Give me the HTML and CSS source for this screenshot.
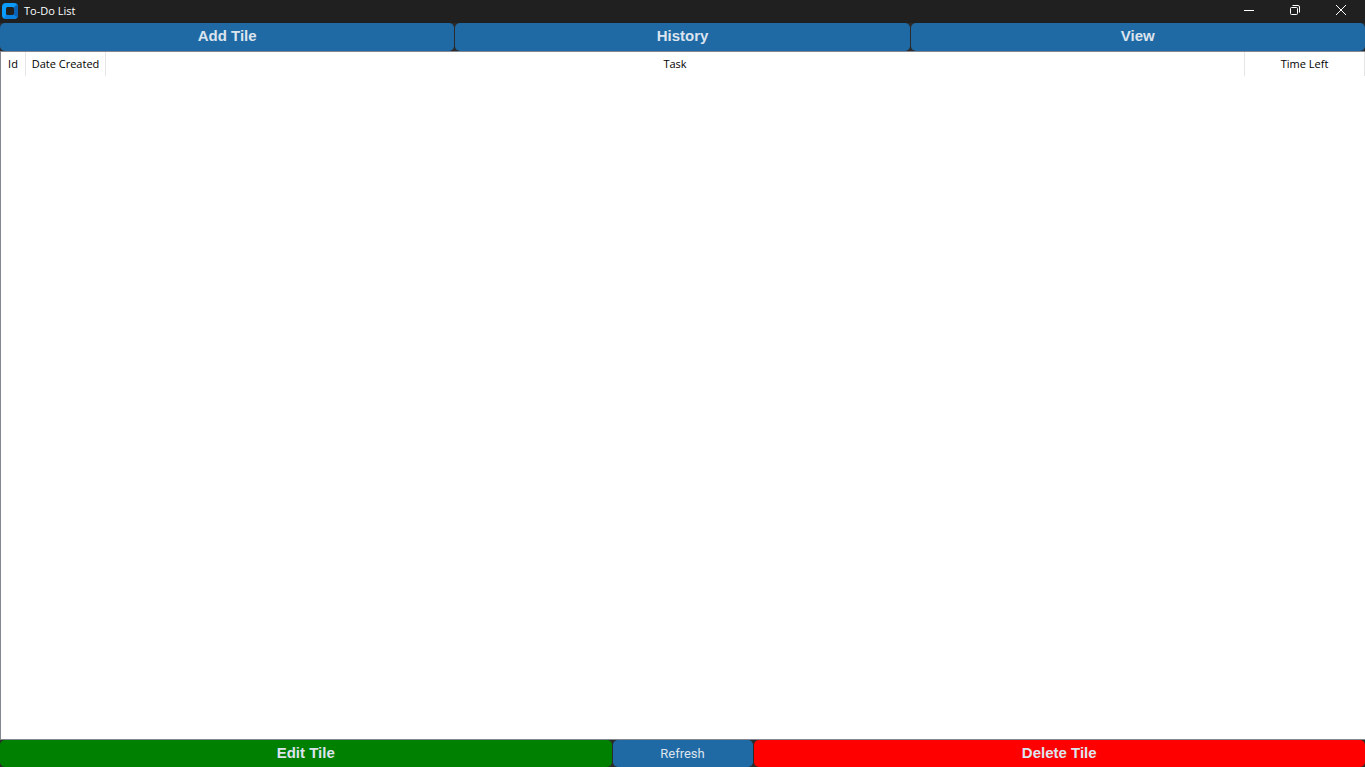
FILE: index.html
```html
<!DOCTYPE html>
<html lang="en">
<head>
<meta charset="utf-8">
<title>To-Do List</title>
<link rel="stylesheet" href="styles.css">
</head>
<body>
<div class="window">
  <header class="titlebar">
    <svg class="app-icon" viewBox="0 0 16 16" aria-hidden="true">
      <rect width="16" height="16" rx="4" fill="#0a9cff"/>
      <path d="M12 4l3-2.500A4 4 0 0 1 16 4v8a4 4 0 0 1-1 2.500L12 12z" fill="#0b62b5"/>
      <path d="M4 12h8l3 2.500A4 4 0 0 1 12 16H4a4 4 0 0 1-2-.5z" fill="#0a80e0"/>
      <rect x="4" y="4" width="8" height="8" rx="1.500" fill="#202020"/>
    </svg>
    <h1 class="title">To-Do List</h1>
    <div class="controls">
      <button class="control" type="button" aria-label="Minimize">
        <svg class="glyph" viewBox="0 0 10 10"><path d="M0 5.500h10"/></svg>
      </button>
      <button class="control" type="button" aria-label="Restore">
        <svg class="glyph" viewBox="0 0 10 10"><rect x=".5" y="2.500" width="7" height="7" rx="1"/><path d="M2.500.5H8A1.500 1.500 0 0 1 9.500 2v5.500"/></svg>
      </button>
      <button class="control" type="button" aria-label="Close">
        <svg class="glyph" viewBox="0 0 10 10"><path d="M0 0l10 10M10 0L0 10"/></svg>
      </button>
    </div>
  </header>
  <nav class="toolbar">
    <button class="button" type="button">Add Tile</button>
    <button class="button" type="button">History</button>
    <button class="button" type="button">View</button>
  </nav>
  <main class="list">
    <table class="tasks">
      <colgroup><col class="col-id"><col class="col-date"><col><col class="col-time"></colgroup>
      <thead>
        <tr><th scope="col">Id</th><th scope="col">Date Created</th><th scope="col">Task</th><th scope="col">Time Left</th></tr>
      </thead>
      <tbody></tbody>
    </table>
  </main>
  <footer class="actions">
    <button class="button edit" type="button">Edit Tile</button>
    <button class="button refresh" type="button">Refresh</button>
    <button class="button delete" type="button">Delete Tile</button>
  </footer>
</div>
</body>
</html>
```
FILE: styles.css
```css
* {
  box-sizing: border-box;
}

body {
  margin: 0;
  background: #2b2b2b;
  font-family: "Open Sans", "Noto Sans", sans-serif;
}

.window {
  display: flex;
  flex-direction: column;
  height: 100vh;
}

.titlebar {
  display: flex;
  align-items: center;
  height: 23px;
  padding: 0 1px 1px 2px;
  background: #202020;
  color: #fff;
}

.app-icon {
  width: 16px;
  height: 16px;
}

.title {
  margin: 0 0 0 6px;
  font-size: 11px;
  font-weight: 400;
  line-height: 18px;
}

.controls {
  display: flex;
  align-self: flex-start;
  margin-left: auto;
}

.control {
  display: flex;
  align-items: center;
  justify-content: center;
  width: 46px;
  height: 20px;
  padding: 0;
  border: 0;
  background: none;
}

.control:hover {
  background: #3a3a3a;
}

.glyph {
  width: 10px;
  height: 10px;
  overflow: visible;
  fill: none;
  stroke: #fff;
}

.toolbar {
  display: grid;
  grid-template-columns: repeat(3, 1fr);
  gap: 1px;
  height: 28px;
}

.button {
  padding: 0 0 2px;
  border: 0;
  border-radius: 5px;
  background: #1f6aa5;
  color: #dce4ee;
  font: bold 15px/20px "Liberation Sans", Arial, sans-serif;
}

.list {
  flex: 1;
  border: 1px solid #828790;
  border-right: 0;
  background: #fff;
  color: #000;
}

.tasks {
  width: 100%;
  border-collapse: separate;
  border-spacing: 0;
  table-layout: fixed;
}

.tasks th {
  height: 24px;
  padding: 0;
  border-right: 1px solid #e5e5e5;
  font-size: 11px;
  font-weight: 400;
  line-height: 16px;
  white-space: nowrap;
}

.col-id {
  width: 25px;
}

.col-date {
  width: 80px;
}

.col-time {
  width: 120px;
}

.actions {
  display: grid;
  grid-template-columns: 1fr 140px 1fr;
  column-gap: 1px;
  height: 27px;
}

.edit {
  background: #008000;
}

.refresh {
  padding: 0;
  font: 13px/20px Roboto, sans-serif;
}

.delete {
  background: #f00;
}
```
